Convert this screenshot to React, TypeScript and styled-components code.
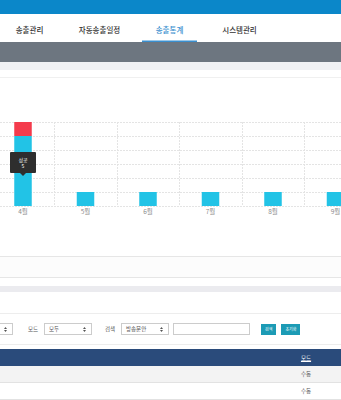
import React from "react";
import styled, { createGlobalStyle } from "styled-components";

const GlobalStyle = createGlobalStyle`
  html, body {
    margin: 0;
    padding: 0;
    background: #ffffff;
  }
  body {
    width: 341px;
    height: 400px;
    overflow: hidden;
    font-family: "Noto Sans CJK KR", "Noto Sans", sans-serif;
    color: #333333;
  }
`;

const tabs = ["송출관리", "자동송출일정", "송출통계", "시스템관리"];
const months = ["4월", "5월", "6월", "7월", "8월", "9월"];
const rows = ["수동", "수동"];

// chart geometry (svg coords, panel starts at y=78)
const gridYs = [44, 58, 72, 86, 100, 114, 128];
const colXs = [54, 117, 179, 242, 304];
const colW = 62.5;
const firstCenter = 23;

export default function App() {
  return (
    <Page>
      <GlobalStyle />
      <TopBar />
      <Nav>
        {tabs.map((t, i) => (
          <Tab key={t} active={i === 2}>
            {t}
          </Tab>
        ))}
      </Nav>
      <SubBar />
      <LightBand />
      <WhiteGap />

      <ChartPanel>
        <svg width="341" height="178" viewBox="0 0 341 178">
          {gridYs.map((y) => (
            <line
              key={y}
              x1="0"
              x2="341"
              y1={y + 0.5}
              y2={y + 0.5}
              stroke="#e4e4e4"
              strokeWidth="1"
              strokeDasharray="2 1"
            />
          ))}
          {colXs.map((x) => (
            <line
              key={x}
              x1={x + 0.5}
              x2={x + 0.5}
              y1="44"
              y2="128"
              stroke="#e4e4e4"
              strokeWidth="1"
              strokeDasharray="2 1"
            />
          ))}
          {months.map((m, i) => {
            const cx = firstCenter + i * colW;
            const tall = i === 0;
            return (
              <g key={m}>
                {tall && (
                  <rect x={cx - 8.75} y="44" width="17.5" height="14" fill="#f43b4c" />
                )}
                <rect
                  x={cx - 8.75}
                  y={tall ? 58 : 114}
                  width="17.5"
                  height={tall ? 70 : 14}
                  fill="#22c3e6"
                />
                <text
                  x={cx}
                  y="134"
                  fontSize="6.5"
                  fill="#8c8c8c"
                  textAnchor="middle"
                  dominantBaseline="middle"
                  fontFamily='"Noto Sans CJK KR", sans-serif'
                >
                  {m}
                </text>
              </g>
            );
          })}
        </svg>
        <Tooltip>
          <span>성공</span>
          <span>5</span>
        </Tooltip>
      </ChartPanel>

      <StripPanel />
      <WhiteSpacer height={8} />
      <GrayStrip />
      <WhiteSpacer height={21} />

      <SearchRow>
        <Select width={48} cut>
          <span />
          <Arrows />
        </Select>
        <Label>모드</Label>
        <Select width={48}>
          <span>모두</span>
          <Arrows />
        </Select>
        <Label spaced>검색</Label>
        <Select width={48}>
          <span>방송문안</span>
          <Arrows />
        </Select>
        <TextInput />
        <Button>검색</Button>
        <Button>초기화</Button>
      </SearchRow>

      <Table>
        <HeadRow>
          <Cell />
          <ModeCell>
            <SortLink>모드</SortLink>
          </ModeCell>
        </HeadRow>
        {rows.map((r, i) => (
          <BodyRow key={i} striped={i % 2 === 0}>
            <Cell />
            <ModeCell>{r}</ModeCell>
          </BodyRow>
        ))}
      </Table>
    </Page>
  );
}

function Arrows() {
  return (
    <svg width="3" height="5" viewBox="0 0 3 5">
      <path d="M1.5 0 L3 2 L0 2 Z M0 3 L3 3 L1.5 5 Z" fill="#555" />
    </svg>
  );
}

const Page = styled.div`
  width: 341px;
  height: 400px;
  overflow: hidden;
  display: flex;
  flex-direction: column;
`;

const TopBar = styled.div`
  height: 14px;
  background: #0b87c9;
  flex-shrink: 0;
`;

const Nav = styled.div`
  height: 28px;
  display: flex;
  align-items: stretch;
  gap: 15px;
  padding-left: 2px;
  background: #ffffff;
  flex-shrink: 0;
`;

const Tab = styled.div<{ active?: boolean }>`
  width: 55px;
  display: flex;
  align-items: center;
  justify-content: center;
  font-size: 7.5px;
  font-weight: 500;
  white-space: nowrap;
  color: ${(p) => (p.active ? "#3a8fcf" : "#333333")};
  box-shadow: ${(p) => (p.active ? "inset 0 -1.5px 0 #3a8fcf" : "none")};
  padding-top: 2px;
`;

const SubBar = styled.div`
  height: 20px;
  background: #6d7680;
  flex-shrink: 0;
`;

const LightBand = styled.div`
  height: 8px;
  background: #f0f1f4;
  flex-shrink: 0;
`;

const WhiteGap = styled.div`
  height: 7px;
  border-bottom: 1px solid #f0f0f0;
  flex-shrink: 0;
`;

const ChartPanel = styled.div`
  position: relative;
  height: 178px;
  border-bottom: 1px solid #e6e6e6;
  flex-shrink: 0;

  svg {
    display: block;
  }
`;

const Tooltip = styled.div`
  position: absolute;
  left: 10px;
  top: 74px;
  width: 26px;
  height: 21px;
  background: #2e2e2e;
  border-radius: 1px;
  color: #ffffff;
  font-size: 5px;
  line-height: 6px;
  display: flex;
  flex-direction: column;
  align-items: center;
  justify-content: center;

  &::after {
    content: "";
    position: absolute;
    left: 10px;
    bottom: -3px;
    border-left: 3px solid transparent;
    border-right: 3px solid transparent;
    border-top: 3px solid #2e2e2e;
  }
`;

const StripPanel = styled.div`
  height: 20px;
  background: #fcfcfc;
  border-bottom: 1px solid #e6e6e6;
  flex-shrink: 0;
`;

const WhiteSpacer = styled.div<{ height: number }>`
  height: ${(p) => p.height}px;
  flex-shrink: 0;
`;

const GrayStrip = styled.div`
  height: 6px;
  background: #ebebef;
  flex-shrink: 0;
`;

const SearchRow = styled.div`
  height: 30px;
  display: flex;
  align-items: center;
  gap: 5px;
  border-top: 1px solid #ededed;
  border-bottom: 1px solid #ededed;
  flex-shrink: 0;
`;

const Select = styled.div<{ width: number; cut?: boolean }>`
  box-sizing: border-box;
  flex-shrink: 0;
  width: ${(p) => p.width}px;
  height: 12px;
  margin-left: ${(p) => (p.cut ? "-35px" : "0")};
  margin-right: ${(p) => (p.cut ? "10px" : "0")};
  border: 1px solid #cccccc;
  background: #ffffff;
  display: flex;
  align-items: center;
  justify-content: space-between;
  padding: 0 5px 0 4px;
  font-size: 5.5px;
  color: #555555;
`;

const Label = styled.span<{ spaced?: boolean }>`
  width: 11px;
  flex-shrink: 0;
  margin-left: ${(p) => (p.spaced ? "8px" : "0")};
  font-size: 5.5px;
  color: #555555;
  white-space: nowrap;
`;

const TextInput = styled.div`
  box-sizing: border-box;
  flex-shrink: 0;
  width: 77px;
  height: 12px;
  margin-left: -1px;
  margin-right: 6px;
  border: 1px solid #cccccc;
  background: #ffffff;
`;

const Button = styled.div`
  height: 11px;
  padding: 0 4px;
  background: #1c9bb5;
  color: #ffffff;
  font-size: 4px;
  display: flex;
  align-items: center;
  justify-content: center;
  white-space: nowrap;
`;

const Table = styled.div`
  margin-top: 4px;
  display: flex;
  flex-direction: column;
  flex-shrink: 0;
`;

const HeadRow = styled.div`
  height: 17px;
  display: flex;
  align-items: center;
  background: #2a4b7b;
  color: #ffffff;
  font-size: 5.5px;
`;

const BodyRow = styled.div<{ striped?: boolean }>`
  height: 16px;
  display: flex;
  align-items: center;
  background: ${(p) => (p.striped ? "#f3f3f3" : "#ffffff")};
  border-bottom: 1px solid #e2e2e2;
  font-size: 5.5px;
  color: #555555;
`;

const Cell = styled.div`
  flex: 1;
`;

const ModeCell = styled.div`
  width: 50px;
  margin-right: 10px;
  text-align: center;
`;

const SortLink = styled.span`
  text-decoration: underline;
`;
